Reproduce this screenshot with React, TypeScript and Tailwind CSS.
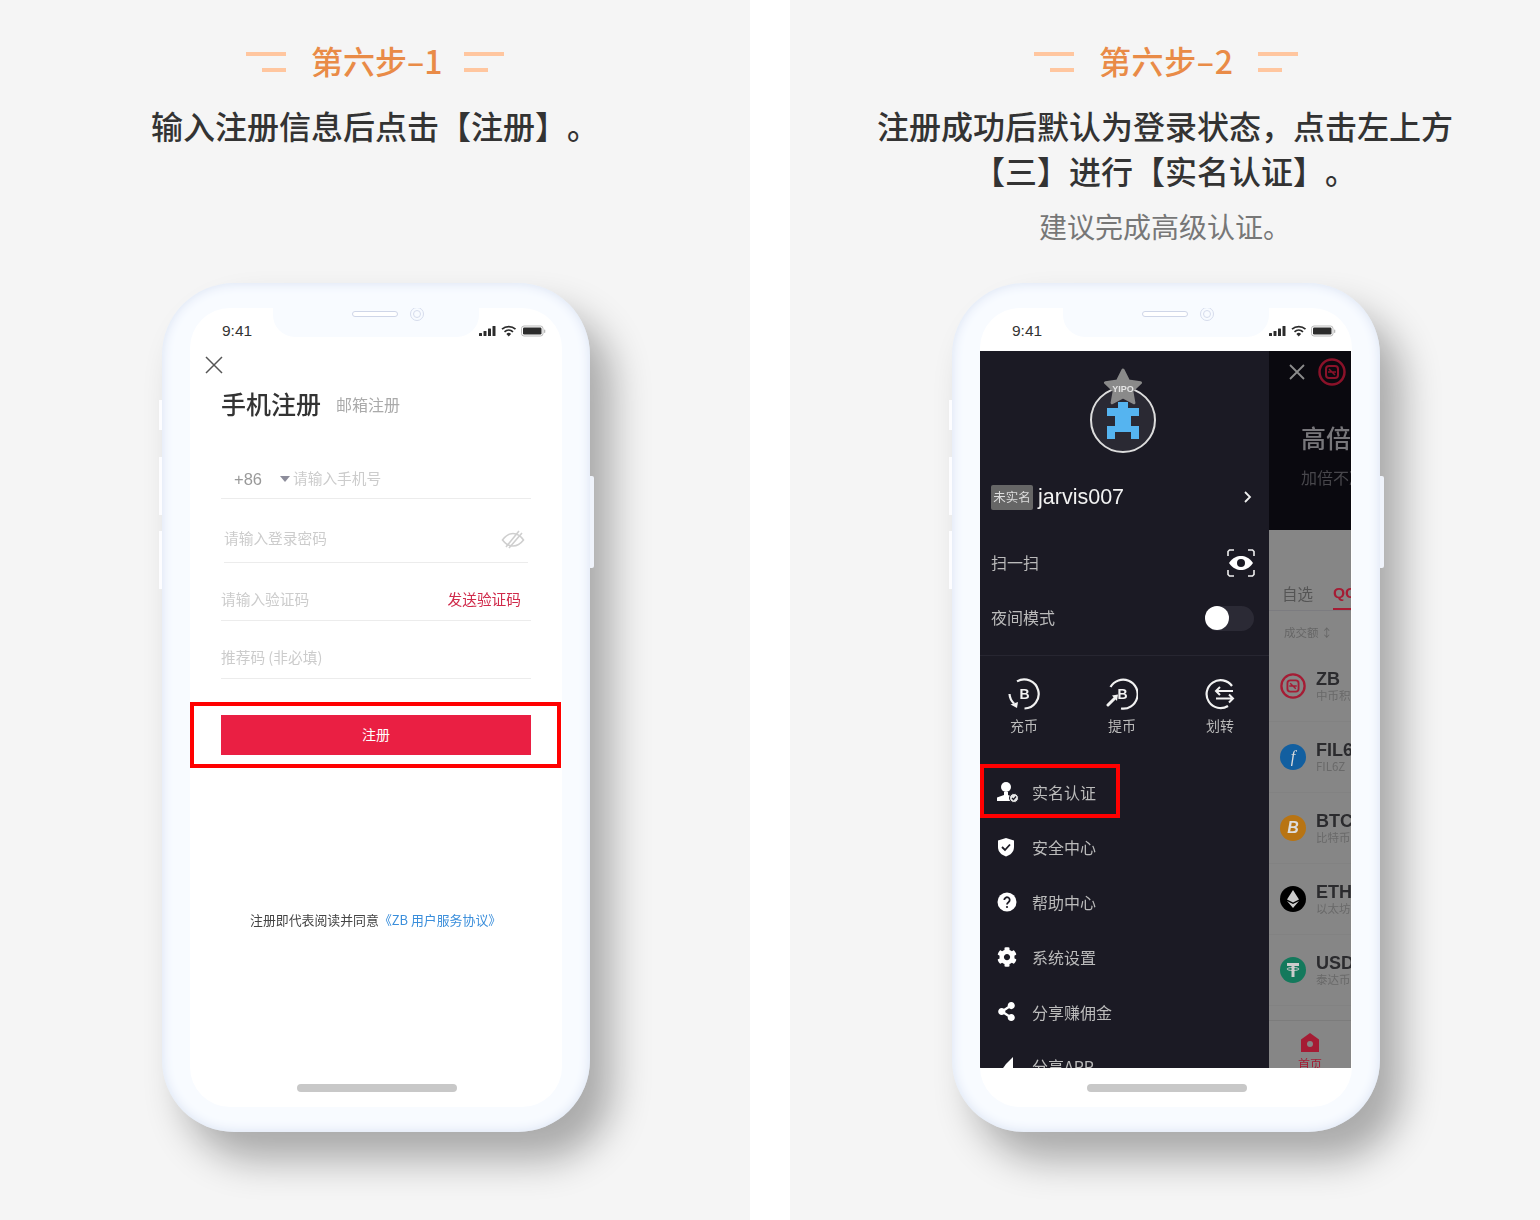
import type { ReactNode } from "react";
import { FaCog, FaShareAlt } from "react-icons/fa";

function StepHeader({ label, second }: { label: string; second?: boolean }) {
  return (
    <div className={`flex items-center justify-center gap-[26px] h-[36px] ${second ? "ml-[2px]" : ""}`}>
      <div className="flex flex-col items-end gap-[12px] w-[40px]">
        <div className="h-[4px] w-[40px] bg-[#ffc69f]" />
        <div className="h-[4px] w-[24px] bg-[#ffc69f]" />
      </div>
      <div
        className={`-ml-[1px] pb-[3px] text-[32px] leading-[33px] font-medium text-[#e98b47] whitespace-nowrap ${
          second ? "w-[135px] tracking-[0.6px]" : "w-[129px]"
        }`}
      >
        {label}
      </div>
      <div className="flex flex-col items-start gap-[12px] w-[40px] -ml-[2px]">
        <div className="h-[4px] w-[40px] bg-[#ffc69f]" />
        <div className="h-[4px] w-[24px] bg-[#ffc69f]" />
      </div>
    </div>
  );
}

function StatusIcons() {
  return (
    <svg width="67" height="12" viewBox="0 0 67 12" fill="#2c2c2c">
      <rect x="0" y="8" width="3" height="3" rx="0.5" />
      <rect x="4.5" y="6" width="3" height="5" rx="0.5" />
      <rect x="9" y="3.5" width="3" height="7.5" rx="0.5" />
      <rect x="13.5" y="1" width="3" height="10" rx="0.5" />
      <path d="M23 4.2a10 10 0 0 1 13.5 0" fill="none" stroke="#2c2c2c" strokeWidth="1.7" />
      <path d="M25.5 6.8a6.4 6.4 0 0 1 8.5 0" fill="none" stroke="#2c2c2c" strokeWidth="1.7" />
      <path d="M27.4 8.9a3.4 3.4 0 0 1 4.7 0L29.75 11.4z" />
      <rect x="42.5" y="1" width="21.5" height="10" rx="2.5" fill="none" stroke="#bbb" strokeWidth="1" />
      <rect x="44" y="2.5" width="18.5" height="7" rx="1.2" />
      <rect x="65" y="4.5" width="1.3" height="3.4" rx="0.6" fill="#bbb" />
    </svg>
  );
}

function Phone({ children }: { children: ReactNode }) {
  return (
    <div className="relative ml-[162px] w-[428px] h-[849px] rounded-[72px] bg-[#f8fbff] px-[28px] py-[25px] shadow-[inset_0_0_12px_#d8e1f2,22px_28px_38px_rgba(0,0,0,0.31)]">
      <div className="absolute -left-[3px] top-[117px] w-[3px] h-[30px] bg-[#fdfdff]" />
      <div className="absolute -left-[3px] top-[174px] w-[3px] h-[58px] bg-[#fdfdff]" />
      <div className="absolute -left-[3px] top-[248px] w-[3px] h-[58px] bg-[#fdfdff]" />
      <div className="absolute -right-[4px] top-[193px] w-[4px] h-[92px] rounded-r-[2px] bg-[#eff3fb]" />
      <div className="relative h-[799px] rounded-[40px] overflow-hidden bg-white flex flex-col">
        <div className="absolute left-[83px] top-0 w-[206px] h-[29px] rounded-b-[22px] bg-[#f8fbff] flex items-start gap-[12px] pl-[79px]">
          <div className="mt-[3px] w-[46px] h-[6px] rounded-full bg-white border border-[#cfd6e8]" />
          <div className="-mt-[1px] w-[14px] h-[14px] rounded-full border border-[#d5dbec] flex items-center justify-center">
            <div className="w-[8px] h-[8px] rounded-full border border-[#d5dbec]" />
          </div>
        </div>
        <div className="relative h-[43px] shrink-0 flex items-start justify-between pt-[14px] pl-[32px] pr-[16px]">
          <span className="font-['Liberation_Sans',sans-serif] text-[15.5px] leading-[18px] text-[#333]">9:41</span>
          <div className="pt-[3px]">
            <StatusIcons />
          </div>
        </div>
        <div className="h-[717px] shrink-0 overflow-hidden">{children}</div>
        <div className="flex-1 flex justify-center pt-[16px] pl-[2px]">
          <div className="h-[8px] w-[160px] rounded-full bg-[#c8c8c8]" />
        </div>
      </div>
    </div>
  );
}

function SlashedEye() {
  return (
    <svg width="24" height="20" viewBox="0 0 24 20" fill="none" stroke="#cfcfcf" strokeWidth="1.6">
      <path d="M1.5 11C5 6 8.5 4.5 12 4.5S19 6 22.5 11C19 15.5 15.5 17 12 17S5 15.5 1.5 11Z" />
      <path d="M5 18 18 2M8 19 21 4" />
    </svg>
  );
}

function RegisterScreen() {
  return (
    <div className="relative h-full bg-white">
      <svg className="ml-[15px] mt-[5px]" width="18" height="18" viewBox="0 0 18 18" stroke="#555" strokeWidth="1.5">
        <path d="M1 1 17 17M17 1 1 17" />
      </svg>
      <div className="mt-[12px] ml-[31px] flex items-center gap-[15px] h-[36px] blur-[0.4px]">
        <span className="text-[25px] font-medium text-[#333]">手机注册</span>
        <span className="text-[16px] text-[#aaa]">邮箱注册</span>
      </div>
      <div className="mt-[36px] px-[31px]">
        <div className="h-[41px] pt-[1px] border-b border-[#ececec] flex items-center text-[14.7px] blur-[0.3px]">
          <span className="ml-[13px] w-[46px] pt-[1px] font-['Liberation_Sans',sans-serif] text-[16.5px] text-[#999]">+86</span>
          <span className="w-0 h-0 border-x-[5px] border-x-transparent border-t-[6px] border-t-[#8d8d9b]" />
          <span className="ml-[3px] text-[#ccc]">请输入手机号</span>
        </div>
        <div className="mt-[20px] mx-[3px] h-[44px] pb-[4px] border-b border-[#ececec] flex items-center justify-between pr-[3px] text-[14.7px] text-[#ccc] blur-[0.3px]">
          <span>请输入登录密码</span>
          <SlashedEye />
        </div>
        <div className="mt-[17px] h-[41px] pb-[2px] border-b border-[#ececec] flex items-center justify-between pr-[10px] text-[14.7px] text-[#ccc] blur-[0.3px]">
          <span>请输入验证码</span>
          <span className="text-[#d02a4a]">发送验证码</span>
        </div>
        <div className="mt-[17px] h-[41px] pb-[2px] border-b border-[#ececec] flex items-center text-[14.7px] text-[#ccc] blur-[0.3px]">
          推荐码 (非必填)
        </div>
        <div className="mt-[23px] -ml-[31px] -mr-[30px] border-4 border-[#f00] pt-[9px] pb-[9px] pl-[27px] pr-[26px]">
          <div className="h-[40px] pb-[2px] bg-[#ea1f43] flex items-center justify-center text-[14px] text-white">注册</div>
        </div>
      </div>
      <div className="mt-[142px] pl-[60px] h-[20px] leading-[20px] text-[12.9px] text-[#444] whitespace-nowrap blur-[0.3px]">
        注册即代表阅读并同意
        <span className="text-[#3a8edb]">《ZB 用户服务协议》</span>
      </div>
    </div>
  );
}

function Avatar() {
  return (
    <svg width="72" height="92" viewBox="0 0 72 92">
      <circle cx="36" cy="54" r="32" fill="#2a2933" stroke="#dcdcdc" strokeWidth="2" />
      <path d="M31 36h10v6h11v8h-8v10h8v13h-8v-7H28v7h-8V60h8V50h-8v-8h11z" fill="#55b4f0" />
      <path
        d="M36 4l5.500 11 12 1.700-8.700 8.300 2.100 11.800L36 31l-10.900 5.800 2.100-11.800-8.700-8.300 12-1.700z"
        fill="#8a8a8a"
        stroke="#8a8a8a"
        strokeWidth="3"
        strokeLinejoin="round"
      />
      <text x="36" y="26" textAnchor="middle" fontSize="9" fontWeight="700" fill="#e4e4e4" fontFamily="Liberation Sans">
        YIPO
      </text>
    </svg>
  );
}

function ScanEye() {
  return (
    <svg width="28" height="28" viewBox="0 0 28 28" fill="none">
      <path d="M1 7V2.500L2.500 1H7M21 1h4.500L27 2.500V7M27 21v4.500L25.500 27H21M7 27H2.500L1 25.500V21" stroke="#eee" strokeWidth="1.6" />
      <path d="M2 14c4-5.500 8-7 12-7s8 1.500 12 7c-4 5.500-8 7-12 7s-8-1.500-12-7z" fill="#fff" />
      <circle cx="14" cy="14" r="4" fill="#1b1a24" />
    </svg>
  );
}

function CoinArrow({ kind }: { kind: "in" | "out" }) {
  return (
    <svg width="32" height="32" viewBox="0 0 32 32" fill="none" stroke="#f2f2f2" strokeWidth="2.2">
      {kind === "in" ? (
        <>
          <path d="M9 3.400A14.500 14.500 0 1 1 16.500 30.500" />
          <path d="M1.500 16A14.500 14.500 0 0 0 6 25.500" />
          <path d="M2.500 26.500 9 30l1-6z" fill="#f2f2f2" stroke="none" />
        </>
      ) : (
        <>
          <path d="M4.500 9A14.500 14.500 0 1 1 15 30.500" />
          <path d="M9 20 2 27" strokeWidth="3" strokeLinecap="round" />
          <path d="M6 17.500 12 16.500 11 23z" fill="#f2f2f2" stroke="none" />
        </>
      )}
      <text x="16.500" y="21" textAnchor="middle" fontSize="14" fontWeight="700" fill="#f2f2f2" stroke="none" fontFamily="Liberation Sans">
        B
      </text>
    </svg>
  );
}

function TransferIcon() {
  return (
    <svg width="32" height="32" viewBox="0 0 32 32" fill="none" stroke="#f2f2f2" strokeWidth="2.2">
      <path d="M28 8A14 14 0 1 0 24 28" />
      <path d="M29 13H12M16 9l-4 4 4 4" strokeWidth="2" />
      <path d="M12 20.500h17M25 16.500l4 4-4 4" strokeWidth="2" />
    </svg>
  );
}

function UserCheck() {
  return (
    <svg width="22" height="22" viewBox="0 0 22 22">
      <circle cx="9" cy="6" r="5" fill="#fff" />
      <path d="M7 11h4v3l5 2v4H0v-3.500L7 14z" fill="#fff" />
      <circle cx="17" cy="17" r="4.500" fill="#e6e6e6" stroke="#1b1a24" strokeWidth="1" />
      <path d="M15 17l1.500 1.500 2.500-3" fill="none" stroke="#1b1a24" strokeWidth="1.2" />
    </svg>
  );
}

function ShieldCheck() {
  return (
    <svg width="18" height="20" viewBox="0 0 18 20">
      <path d="M9 1l8 2.500V10c0 5-3.500 8-8 9.500C4.500 18 1 15 1 10V3.500z" fill="#fff" />
      <path d="M5 10l3 3 5-5.500" fill="none" stroke="#1b1a24" strokeWidth="1.8" />
    </svg>
  );
}

function HelpDot() {
  return (
    <svg width="20" height="20" viewBox="0 0 20 20">
      <circle cx="10" cy="10" r="9.500" fill="#fff" />
      <path d="M7.300 8a2.700 2.700 0 1 1 4.200 2.200c-1 .7-1.500 1.200-1.500 2.300" fill="none" stroke="#1b1a24" strokeWidth="1.8" />
      <circle cx="10" cy="15" r="1.100" fill="#1b1a24" />
    </svg>
  );
}

function PlaneStub() {
  return (
    <svg width="18" height="18" viewBox="0 0 18 18">
      <path d="M16 0v18H1L9 7z" fill="#fff" />
    </svg>
  );
}

const menuRows: { label: string; icon: ReactNode }[] = [
  { label: "实名认证", icon: <UserCheck /> },
  { label: "安全中心", icon: <ShieldCheck /> },
  { label: "帮助中心", icon: <HelpDot /> },
  { label: "系统设置", icon: <FaCog size={20} color="#fff" /> },
  { label: "分享赚佣金", icon: <FaShareAlt size={19} color="#fff" /> },
  { label: "分享APP", icon: <PlaneStub /> },
];

const actions: { label: string; icon: ReactNode }[] = [
  { label: "充币", icon: <CoinArrow kind="in" /> },
  { label: "提币", icon: <CoinArrow kind="out" /> },
  { label: "划转", icon: <TransferIcon /> },
];

function Drawer() {
  return (
    <div className="relative w-[289px] h-full bg-[#1b1a24] shrink-0">
      <div className="blur-[0.4px]">
        <div className="h-[126px] pt-[15px] flex justify-center pr-[3px]">
          <Avatar />
        </div>
        <div className="h-[40px] flex items-center pl-[11px] pr-[16px]">
          <span className="w-[42px] h-[25px] rounded-[2px] bg-[#666] flex items-center justify-center text-[12.5px] text-[#ddd]">未实名</span>
          <span className="ml-[5px] font-['Liberation_Sans',sans-serif] text-[21.5px] text-[#f2f2f2]">jarvis007</span>
          <svg className="ml-auto" width="10" height="14" viewBox="0 0 10 14" fill="none" stroke="#eee" strokeWidth="1.8">
            <path d="M2 2l5 5-5 5" />
          </svg>
        </div>
        <div className="mt-[19px] h-[55px] flex items-center justify-between pl-[11px] pr-[14px] text-[16px] text-[#bbb]">
          <span className="pb-[3px]">扫一扫</span>
          <div className="pb-[2px]">
            <ScanEye />
          </div>
        </div>
        <div className="h-[55px] flex items-center justify-between pl-[11px] pr-[15px] text-[16px] text-[#bbb]">
          <span className="pb-[3px]">夜间模式</span>
          <div className="w-[49px] h-[25px] rounded-full bg-[#2b2a35] relative">
            <div className="absolute left-0 top-0 w-[24px] h-[24px] rounded-full bg-white" />
          </div>
        </div>
        <div className="mt-[9px] h-[110px] border-t border-[#272631] pt-[21px]">
          <div className="-ml-[5px] grid grid-cols-[98px_98px_98px]">
            {actions.map((a) => (
              <div key={a.label} className="flex flex-col items-center">
                <div className="h-[34px] flex items-center">{a.icon}</div>
                <span className="mt-[4px] text-[14px] leading-[20px] text-[#bbb]">{a.label}</span>
              </div>
            ))}
          </div>
        </div>
        {menuRows.map((row) => (
          <div key={row.label} className="h-[54.8px] flex items-center text-[16px] text-[#bbb]">
            <div className="w-[52px] pl-[17px] flex justify-start">{row.icon}</div>
            <span>{row.label}</span>
          </div>
        ))}
      </div>
      <div className="absolute left-0 top-[413px] w-[140px] h-[54px] border-4 border-[#f00]" />
    </div>
  );
}

function ZbMark({ size, color }: { size: number; color: string }) {
  return (
    <svg className="shrink-0" width={size} height={size} viewBox="0 0 28 28" fill="none" stroke={color}>
      <circle cx="14" cy="14" r="12.5" strokeWidth="2.5" />
      <rect x="8" y="8" width="12" height="12" rx="3" strokeWidth="2" />
      <path d="M10 14h8M11 11l6 6" strokeWidth="1.5" />
    </svg>
  );
}

function CoinBadge({ bg, children }: { bg: string; children: ReactNode }) {
  return (
    <div className={`w-[26px] h-[26px] rounded-full shrink-0 flex items-center justify-center text-[16px] text-[#ddd] ${bg}`}>
      {children}
    </div>
  );
}

const coins: { name: string; sub: string; icon: ReactNode }[] = [
  { name: "ZB", sub: "中币积分", icon: <ZbMark size={26} color="#a51c34" /> },
  { name: "FIL6", sub: "FIL6Z", icon: <CoinBadge bg="bg-[#125fa0]"><span className="italic font-['Liberation_Serif',serif]">f</span></CoinBadge> },
  { name: "BTC", sub: "比特币", icon: <CoinBadge bg="bg-[#b87413]"><span className="font-bold italic font-['Liberation_Sans',sans-serif]">B</span></CoinBadge> },
  {
    name: "ETH",
    sub: "以太坊",
    icon: (
      <CoinBadge bg="bg-black">
        <svg width="12" height="18" viewBox="0 0 12 18" fill="#ccc">
          <path d="M6 0l6 9.500-6 3-6-3zM0 11l6 3 6-3-6 7z" />
        </svg>
      </CoinBadge>
    ),
  },
  {
    name: "USDT",
    sub: "泰达币",
    icon: (
      <CoinBadge bg="bg-[#14795c]">
        <svg width="16" height="16" viewBox="0 0 16 16" fill="#ccc">
          <path d="M2 1h12v3H9.500v11h-3V4H2z" />
          <ellipse cx="8" cy="7" rx="6" ry="1.5" fill="none" stroke="#ccc" strokeWidth="1" />
        </svg>
      </CoinBadge>
    ),
  },
];

function MarketBehind() {
  return (
    <div className="flex-1 min-w-0 h-full flex flex-col overflow-hidden whitespace-nowrap">
      <div className="h-[179px] shrink-0 bg-[#0a090f] blur-[0.5px]">
        <div className="pt-[7px] pl-[20px] flex items-center gap-[13px]">
          <svg width="16" height="16" viewBox="0 0 16 16" stroke="#8c8c8c" strokeWidth="1.8">
            <path d="M1 1l14 14M15 1 1 15" />
          </svg>
          <ZbMark size={28} color="#8a1229" />
        </div>
        <div className="mt-[33px] pl-[32px] text-[25px] leading-[36px] text-[#77767a] font-medium">高倍杠杆</div>
        <div className="mt-[12px] pl-[32px] text-[16px] leading-[20px] text-[#48474c]">加倍不减</div>
      </div>
      <div className="flex-1 bg-[#868686] flex flex-col min-h-0">
        <div className="blur-[0.5px]">
          <div className="mt-[52px] h-[29px] pl-[13px] flex gap-[20px] text-[15.5px] leading-[22px] border-b border-[#7c7c80]">
            <span className="text-[#555]">自选</span>
            <span className="h-[28px] border-b-2 border-[#a51c34] font-bold text-[#a51c34] font-['Liberation_Sans',sans-serif]">QC</span>
          </div>
          <div className="mt-[11px] mb-[9px] h-[20px] pl-[15px] text-[11.5px] leading-[20px] text-[#666]">成交额 ↕</div>
          {coins.map((c) => (
            <div key={c.name} className="h-[71px] shrink-0 pl-[11px] flex items-center gap-[10px] border-b border-[#828282]">
              {c.icon}
              <div>
                <div className="font-['Liberation_Sans',sans-serif] text-[18px] leading-[18px] font-bold text-[#2b2b2e]">{c.name}</div>
                <div className="text-[11.5px] leading-[15px] text-[#696969]">{c.sub}</div>
              </div>
            </div>
          ))}
          <div className="mt-[14px] border-t border-[#7c7c7c] flex flex-col items-center pt-[12px]">
            <svg width="20" height="19" viewBox="0 0 20 19" fill="#a51c34">
              <path d="M10 0l9 6.500V19H1V6.500z" />
              <circle cx="10" cy="11" r="3" fill="#868686" />
            </svg>
            <span className="mt-[5px] text-[12px] leading-[14px] text-[#a51c34]">首页</span>
          </div>
        </div>
      </div>
    </div>
  );
}

export default function App() {
  return (
    <div className="w-[1540px] h-[1220px] bg-white flex gap-[40px] overflow-hidden font-['Noto_Sans_CJK_SC',sans-serif] [text-spacing-trim:space-all]">
      <section className="w-[750px] h-full bg-[#f5f5f5] shrink-0 overflow-hidden">
        <div className="h-[283px] pt-[44px]">
          <StepHeader label="第六步–1" />
          <p className="mt-[23px] text-center text-[32px] leading-[45px] font-medium text-[#333]">输入注册信息后点击【注册】。</p>
        </div>
        <Phone>
          <RegisterScreen />
        </Phone>
      </section>
      <section className="w-[750px] h-full bg-[#f5f5f5] shrink-0 overflow-hidden">
        <div className="h-[283px] pt-[44px]">
          <StepHeader label="第六步–2" second />
          <p className="mt-[23px] mx-auto w-[580px] text-center text-[32px] leading-[45px] font-medium text-[#333]">
            注册成功后默认为登录状态，点击左上方【三】进行【实名认证】。
          </p>
          <p className="mt-[13px] text-center text-[28px] leading-[40px] text-[#777]">建议完成高级认证。</p>
        </div>
        <Phone>
          <div className="flex h-full w-[371px]">
            <Drawer />
            <MarketBehind />
          </div>
        </Phone>
      </section>
    </div>
  );
}
